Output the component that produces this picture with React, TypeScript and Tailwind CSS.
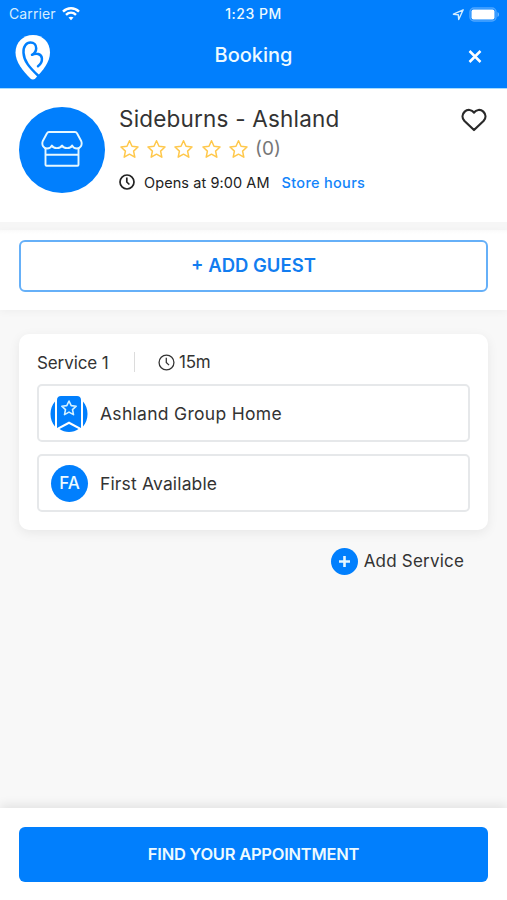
import React from "react";

function StatusBar() {
  return (
    <div className="grid h-7 grid-cols-3 items-center px-2 text-white">
      <div className="flex items-center gap-1.5">
        <span className="pl-px text-[14px] leading-7 tracking-[0.1px] text-[#d5edff]">Carrier</span>
        <svg width="18" height="14" viewBox="0 0 18 14" fill="none" stroke="white" strokeWidth="2.4">
          <path d="M1 4.6c4.600-4.500 11.400-4.500 16 0" />
          <path d="M4 7.9c2.900-2.800 7.100-2.800 10 0" />
          <path d="M6.5 10.6c1.500-1.300 3.500-1.300 5 0L9 13.300z" fill="white" stroke="none" />
        </svg>
      </div>
      <span className="whitespace-nowrap text-center text-[14px] font-medium leading-7 tracking-[0.5px] text-[#edfaff]">1:23 PM</span>
      <div className="flex items-center justify-end gap-1">
        <svg width="13" height="13" viewBox="0 0 13 13" fill="none" stroke="#d5edff" strokeWidth="1.4" strokeLinejoin="round">
          <path d="M11.2 1.8 1.4 6.200l4.900.5.4 4.800z" />
        </svg>
        <svg width="30" height="15" viewBox="0 0 30 15" fill="none">
          <rect x="1" y="1" width="26" height="13" rx="4" stroke="#4ea6ff" strokeWidth="1.4" />
          <rect x="2.500" y="2.500" width="23" height="10" rx="2" fill="white" />
          <path d="M28.5 5c2 1 2 4 0 5z" fill="#6bb6ff" />
        </svg>
      </div>
    </div>
  );
}

function Header() {
  return (
    <header className="h-[89px] shrink-0 border-b border-[#a4dcff] bg-[#017ffd]">
      <StatusBar />
      <div className="grid h-[58px] grid-cols-3 items-center px-[15px]">
        <svg className="mt-0.5" width="36" height="46" viewBox="0 0 36 46" fill="none">
          <path d="M18 0C8 0 .5 7.500.5 17.500c0 9.500 7.500 18.500 14.700 25.700 1.700 1.600 3.700 1.600 5.300 0C28 35.500 35 27 35 17.500 35 7.500 28 0 18 0Z" fill="white" />
          <path d="M23.500 41C14 32 9 26 8.500 17.800 8 11 11.500 7.600 15.500 7.600c3.500 0 5.700 2.500 5.700 5.600 0 3-1.500 5-4.200 6.600 4-2 9.500-1.300 9.900 3.600.3 3.600-1.500 6.100-3.900 7.800" stroke="#017ffd" strokeWidth="2.5" strokeLinecap="round" strokeLinejoin="round" />
        </svg>
        <h1 className="pb-1 text-center text-[20px] font-medium text-[#edfaff]">Booking</h1>
        <button className="mr-[10px] justify-self-end" aria-label="Close">
          <svg width="14" height="14" viewBox="0 0 14 14" stroke="white" strokeWidth="2.5">
            <path d="m1.500 1 11 11m0-11-11 11" />
          </svg>
        </button>
      </div>
    </header>
  );
}

function ClockIcon({ size, weight }: { size: number; weight: number }) {
  return (
    <svg width={size} height={size} viewBox="0 0 16 16" fill="none" stroke="currentColor" strokeWidth={weight}>
      <circle cx="8" cy="8" r="7" />
      <path d="M7.800 3.600V8l2.600 2.500" />
    </svg>
  );
}

function Star() {
  return (
    <svg width="19" height="19" viewBox="0 0 19 19" fill="none" stroke="#ffc84b" strokeWidth="1.5" strokeLinejoin="round">
      <path d="m9.500.8 2.500 5.500 6 .7-4.400 4.100 1.200 6.100-5.300-3-5.300 3 1.200-6.100L1 7l6-.7z" />
    </svg>
  );
}

function StoreInfo() {
  return (
    <section className="flex h-[133px] shrink-0 bg-white pl-[19px] pr-5 pt-[18px]">
      <div className="flex size-[86px] shrink-0 items-center justify-center rounded-full bg-[#017ffd]">
        <svg width="42" height="38" viewBox="0 0 42 38" fill="none" stroke="#e6f8ff" strokeWidth="1.9" strokeLinejoin="round">
          <path d="M6 2.200c.4-.8 1-1.200 2-1.200h26c1 0 1.600.4 2 1.200l4.300 8c1.200 3.700-.8 7.300-4.300 7.300-2.300 0-4-.9-4.800-3-.8 1.700-2.600 2.600-5.100 2.600-2.600 0-4.300-.9-5.100-2.600-.8 1.700-2.600 2.600-5.100 2.600s-4.300-.9-5.100-2.600c-.8 2.100-2.500 3-4.800 3-3.500 0-5.500-3.600-4.300-7.300z" />
          <path d="M4.500 17.500v16.200c0 .6.400 1 1 1h31c.6 0 1-.4 1-1V17.500M4.500 23.800h33" />
        </svg>
      </div>
      <div className="ml-[14px] flex-1">
        <h2 className="h-6 whitespace-nowrap text-[22.5px] leading-6 tracking-[0.2px] text-[#333]">Sideburns - Ashland</h2>
        <div className="mt-[7px] flex h-[22px] items-center">
          <div className="flex gap-[8.4px] pl-[0.5px]">
            {[1, 2, 3, 4, 5].map((n) => (
              <Star key={n} />
            ))}
          </div>
          <span className="ml-[7px] text-[19px] leading-[22px] text-[#777]">(0)</span>
        </div>
        <div className="mt-[13px] flex h-5 items-center text-[14.5px] leading-5 text-[#222]">
          <span className="pb-[3px]">
            <ClockIcon size={16} weight={1.7} />
          </span>
          <span className="ml-[9px] whitespace-nowrap tracking-[0.08px]">Opens at 9:00 AM</span>
          <a className="ml-3 whitespace-nowrap font-medium tracking-[0.3px] text-[#1284fa]">Store hours</a>
        </div>
      </div>
      <svg className="mt-px shrink-0" width="26" height="24" viewBox="0 0 26 24" fill="none" stroke="#292929" strokeWidth="2.2" strokeLinejoin="round">
        <path d="M13 4.500C10.800 1.500 6.500 1.100 3.700 3.600.9 6.300.8 10 3.500 13l9.500 9 9.500-9c2.700-3 2.600-6.700-.2-9.400C19.500 1.100 15.200 1.500 13 4.500Z" />
      </svg>
    </section>
  );
}

function GroupBadge() {
  return (
    <svg className="mt-px" width="38" height="38" viewBox="0 0 38 38" fill="none">
      <path d="M5 6.500v25C-1 25-1 13 5 6.500ZM33 6.500v25c6-6.500 6-18.500 0-25Z" fill="#017ffd" />
      <path d="M7 5c0-2.500 1.500-4 4-4h16c2.500 0 4 1.500 4 4v28l-12-6.500L7 33z" fill="#017ffd" />
      <path d="m9.500 34 9.500-5 9.500 5c-5 4-14 4-19 0Z" fill="#017ffd" />
      <path d="m19 6 2.200 4.600 5 .6-3.700 3.400 1 5-4.500-2.500-4.500 2.500 1-5-3.700-3.400 5-.6z" stroke="#d4f2ff" strokeWidth="1.6" strokeLinejoin="round" />
    </svg>
  );
}

function ServiceCard() {
  return (
    <section className="flex h-[196px] flex-col rounded-[10px] bg-white px-[18px] pt-[17px] text-[#333] shadow-[0_3px_12px_rgba(0,0,0,0.07)]">
      <div className="flex h-[22px] items-center text-[17px] leading-[22px]">
        <span className="w-[97px] whitespace-nowrap pt-px tracking-[-0.1px]">Service 1</span>
        <span className="h-5 w-px bg-[#dcdcdc]" />
        <span className="ml-[23px] flex items-center gap-1">
          <ClockIcon size={17} weight={1.2} />
          <span className="tracking-[-0.2px]">15m</span>
        </span>
      </div>
      <div className="mt-[11px] flex h-[58px] items-center rounded-[5px] border-2 border-[#e6e8ea] pl-[11px]">
        <GroupBadge />
        <span className="ml-3 pt-0.5 text-[17.5px] tracking-[0.3px]">Ashland Group Home</span>
      </div>
      <div className="mt-3 flex h-[58px] items-center rounded-[5px] border-2 border-[#e6e8ea] pl-3">
        <span className="flex size-[37px] items-center justify-center rounded-full bg-[#017ffd] pt-0.5 text-[17px] font-medium text-[#edfaff]">FA</span>
        <span className="ml-3 pt-0.5 text-[17.5px] tracking-[0.15px]">First Available</span>
      </div>
    </section>
  );
}

function App() {
  return (
    <div className="flex h-[900px] w-[507px] flex-col overflow-hidden bg-[#f8f8f8] font-['Inter','Liberation_Sans',sans-serif]">
      <Header />
      <StoreInfo />
      <div className="h-2 shrink-0 bg-[#f6f6f6]" />
      <section className="h-20 shrink-0 bg-linear-to-b from-[#fafafa] to-white to-5% px-[19px] pt-[10px] shadow-[0_2px_8px_rgba(0,0,0,0.04)]">
        <button className="h-[52px] w-full rounded-md border-2 border-[#66b0f8] bg-white text-[18.5px] font-semibold text-[#127df0]">
          + ADD GUEST
        </button>
      </section>
      <main className="flex-1 px-[19px] pt-6">
        <ServiceCard />
        <button className="ml-auto mr-6 mt-[17px] flex h-7 items-center gap-1.5 text-[17px] tracking-[0.2px] text-[#333]">
          <svg width="27" height="27" viewBox="0 0 27 27">
            <circle cx="13.5" cy="13.5" r="13.5" fill="#017ffd" />
            <path d="M13.500 8v11M8 13.500h11" stroke="#e6f7ff" strokeWidth="2.6" />
          </svg>
          <span className="pt-0.5">Add Service</span>
        </button>
      </main>
      <footer className="h-[92px] shrink-0 bg-white px-[19px] pt-[19px] shadow-[0_-3px_10px_rgba(0,0,0,0.09)]">
        <button className="h-[55px] w-full rounded-md bg-[#017ffd] text-[16.5px] font-semibold tracking-[-0.24px] text-[#edfaff]">
          FIND YOUR APPOINTMENT
        </button>
      </footer>
    </div>
  );
}

export default App;
